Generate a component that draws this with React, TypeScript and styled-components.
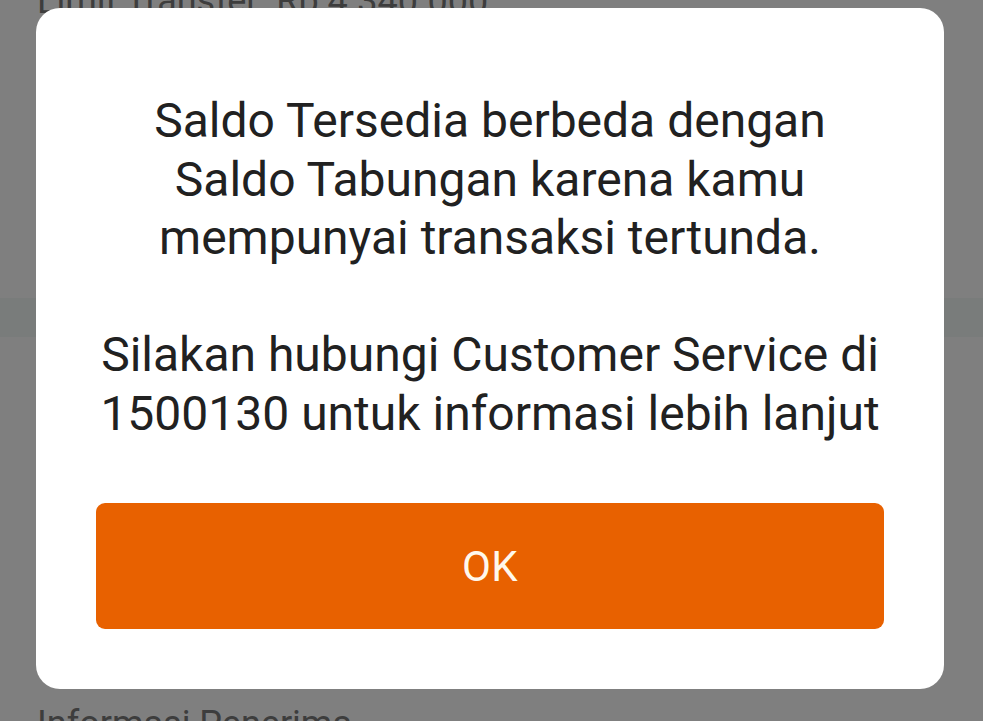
import React from "react";
import styled, { createGlobalStyle } from "styled-components";

const Global = createGlobalStyle`
  html, body { margin: 0; padding: 0; }
  body {
    width: 983px;
    height: 721px;
    overflow: hidden;
    background: #ffffff;
    font-family: Roboto, "Noto Sans", "Liberation Sans", sans-serif;
  }
`;

const Page = styled.div`
  height: 721px;
  overflow: hidden;
  background: #ffffff;
  display: flex;
  flex-direction: column;
`;

const BackLabel = styled.div<{ $top: number }>`
  flex-shrink: 0;
  margin-top: ${(p) => p.$top}px;
  padding-left: 37px;
  font-size: 36px;
  line-height: 42px;
  color: #7a7a7a;
  white-space: nowrap;
`;

const Band = styled.div`
  flex-shrink: 0;
  margin-top: 276px;
  height: 39px;
  background: #f3f9f7;
`;

const Overlay = styled.div`
  position: fixed;
  inset: 0;
  background: rgba(0, 0, 0, 0.5);
  display: flex;
  align-items: flex-start;
  justify-content: flex-start;
  padding: 8px 0 0 36px;
`;

const Dialog = styled.div`
  width: 908px;
  height: 681px;
  box-sizing: border-box;
  background: #ffffff;
  border-radius: 24px;
  padding: 84px 60px 60px;
  display: flex;
  flex-direction: column;
  align-items: stretch;
`;

const Message = styled.div`
  margin: 0 -40px;
  display: flex;
  flex-direction: column;
  gap: 58.5px;
`;

const Paragraph = styled.p`
  margin: 0;
  font-size: 48px;
  line-height: 58.5px;
  color: #212121;
  text-align: center;
  white-space: pre-line;
`;

const OkButton = styled.button`
  margin-top: auto;
  height: 126px;
  border: none;
  border-radius: 9px;
  background: #e86100;
  color: #fff8ec;
  font-family: Roboto, "Noto Sans", "Liberation Sans", sans-serif;
  font-size: 42px;
  letter-spacing: 0.5px;
  cursor: pointer;
`;

export default function App() {
  return (
    <>
      <Global />
      <Page>
        <BackLabel $top={-20}>Limit Transfer: Rp 4.340.000</BackLabel>
        <Band />
        <BackLabel $top={366}>Informasi Penerima</BackLabel>
      </Page>
      <Overlay>
        <Dialog role="dialog">
          <Message>
            <Paragraph>
              {"Saldo Tersedia berbeda dengan\nSaldo Tabungan karena kamu\nmempunyai transaksi tertunda."}
            </Paragraph>
            <Paragraph>
              {"Silakan hubungi Customer Service di\n1500130 untuk informasi lebih lanjut"}
            </Paragraph>
          </Message>
          <OkButton>OK</OkButton>
        </Dialog>
      </Overlay>
    </>
  );
}
